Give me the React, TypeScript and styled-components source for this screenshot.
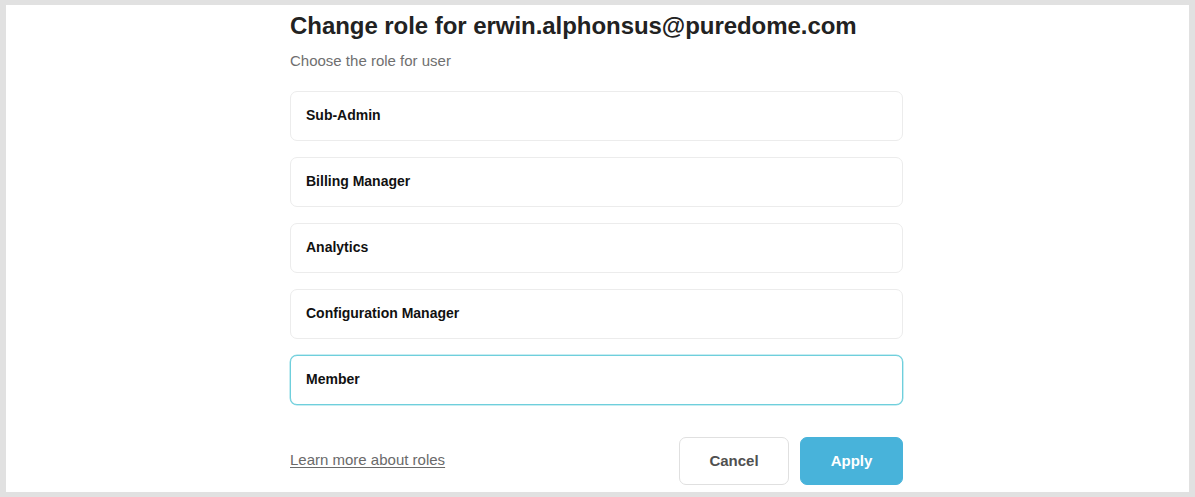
import React, { useState } from "react";
import styled, { createGlobalStyle } from "styled-components";

const Global = createGlobalStyle`
  html, body { margin: 0; padding: 0; }
  body {
    background: #e1e1e1;
    font-family: "Liberation Sans", Arial, sans-serif;
  }
`;

const Frame = styled.div`
  margin: 5px 6px;
  height: 487px;
  background: #ffffff;
  box-sizing: border-box;
  padding: 7px 0 0 284px;
`;

const Column = styled.div`
  width: 613px;
  display: flex;
  flex-direction: column;
`;

const Title = styled.h1`
  margin: 0;
  font-size: 24px;
  line-height: 28px;
  font-weight: 700;
  color: #222;
  letter-spacing: -0.05px;
`;

const Subtitle = styled.p`
  margin: 11px 0 0;
  font-size: 15px;
  line-height: 20px;
  color: #6f6f6f;
`;

const RoleList = styled.div`
  margin-top: 20px;
  display: flex;
  flex-direction: column;
  gap: 16px;
`;

const RoleCard = styled.button<{ $selected: boolean }>`
  display: flex;
  align-items: center;
  height: 50px;
  box-sizing: border-box;
  padding: 0 15px 3px;
  background: #fff;
  border: 1px solid ${(p) => (p.$selected ? "#6fcfdc" : "#ececec")};
  box-shadow: ${(p) => (p.$selected ? "0 0 0 0.5px #8fdbe5" : "none")};
  border-radius: 7px;
  font-family: inherit;
  font-size: 14px;
  font-weight: 700;
  color: #111;
  text-align: left;
  cursor: pointer;
`;

const Footer = styled.div`
  margin-top: 32px;
  display: flex;
  align-items: center;
  justify-content: space-between;
`;

const LearnLink = styled.a`
  font-size: 15px;
  color: #6a6a6a;
  text-decoration: underline;
  text-underline-offset: 2px;
  margin-top: -3px;
  cursor: pointer;
`;

const Actions = styled.div`
  display: flex;
  gap: 11px;
`;

const Btn = styled.button<{ $primary?: boolean }>`
  height: 48px;
  box-sizing: border-box;
  border-radius: 7px;
  font-family: inherit;
  font-size: 15px;
  font-weight: 700;
  padding-bottom: 3px;
  cursor: pointer;
  width: ${(p) => (p.$primary ? "103px" : "110px")};
  background: ${(p) => (p.$primary ? "#48b3da" : "#fff")};
  color: ${(p) => (p.$primary ? "#fff" : "#505050")};
  border: 1px solid ${(p) => (p.$primary ? "#48b3da" : "#e0e0e0")};
`;

const roles = [
  "Sub-Admin",
  "Billing Manager",
  "Analytics",
  "Configuration Manager",
  "Member",
];

export default function App() {
  const [selected, setSelected] = useState("Member");
  return (
    <>
      <Global />
      <Frame>
        <Column>
          <Title>Change role for erwin.alphonsus@puredome.com</Title>
          <Subtitle>Choose the role for user</Subtitle>
          <RoleList>
            {roles.map((r) => (
              <RoleCard
                key={r}
                $selected={r === selected}
                onClick={() => setSelected(r)}
              >
                {r}
              </RoleCard>
            ))}
          </RoleList>
          <Footer>
            <LearnLink>Learn more about roles</LearnLink>
            <Actions>
              <Btn>Cancel</Btn>
              <Btn $primary>Apply</Btn>
            </Actions>
          </Footer>
        </Column>
      </Frame>
    </>
  );
}
